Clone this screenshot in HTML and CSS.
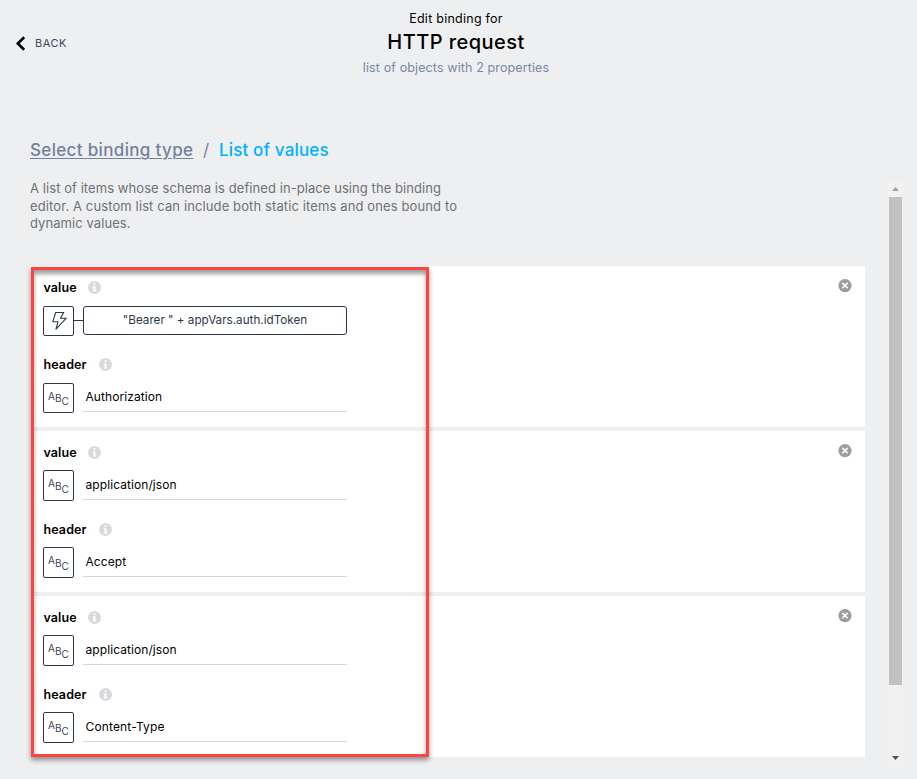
FILE: index.html
```html
<!DOCTYPE html>
<html lang="en">
<head>
<meta charset="utf-8">
<title>Edit binding</title>
<link rel="stylesheet" href="styles.css">
</head>
<body>
<svg class="defs" width="0" height="0">
  <symbol id="info" viewBox="0 0 13 13"><circle cx="6.5" cy="6.5" r="6.5" fill="#d8d9dc"/><path d="M5.5 2.2h2v1.9h-2zM4.6 5.2h2.9v4.1h.9v1.3H4.6V9.3h.9V6.5h-.9z" fill="#fff"/></symbol>
  <symbol id="close" viewBox="0 0 14 14"><circle cx="7" cy="6.6" r="6.6" fill="#9b9da1"/><path d="M4.3 3.9l5.4 5.4m0-5.4l-5.4 5.4" stroke="#fff" stroke-width="1.6"/></symbol>
</svg>
<header class="top">
  <a class="back"><svg width="11" height="15" viewBox="0 0 11 15"><path d="M9.2 1.2L2.8 7.5l6.4 6.3" fill="none" stroke="#000" stroke-width="2.6"/></svg><span>BACK</span></a>
  <div class="heading">
    <div class="kicker"><span>Edit binding for</span></div>
    <h1><span>HTTP request</span></h1>
    <div class="sub"><span>list of objects with 2 properties</span></div>
  </div>
</header>
<main>
  <section class="content">
    <nav class="crumbs"><a>Select binding type</a><i>/</i><b>List of values</b></nav>
    <p class="desc"><span class="d1">A list of items whose schema is defined in-place using the binding</span><br><span class="d2">editor. A custom list can include both static items and ones bound to</span><br><span class="d3">dynamic values.</span></p>
    <div class="list">
      <article class="card first">
        <svg class="close"><use href="#close"/></svg>
        <div class="field">
          <div class="label"><span class="value">value</span><svg><use href="#info"/></svg></div>
          <div class="row"><div class="type"><svg width="18" height="20" viewBox="0 0 18 20"><path d="M5.7 1.5h8L10.5 7.2h5.8L6 18.2l2-7.5H2.9z" fill="none" stroke="#2f3747" stroke-width="1.1" stroke-linejoin="round"/></svg></div><div class="link"></div><div class="formula"><span>"Bearer " + appVars.auth.idToken</span></div></div>
        </div>
        <div class="field">
          <div class="label"><span class="header">header</span><svg><use href="#info"/></svg></div>
          <div class="row"><div class="type abc"><span>A</span><span>B</span><span>C</span></div><div class="input"><span class="auth">Authorization</span></div></div>
        </div>
      </article>
      <article class="card">
        <svg class="close"><use href="#close"/></svg>
        <div class="field">
          <div class="label"><span class="value">value</span><svg><use href="#info"/></svg></div>
          <div class="row"><div class="type abc"><span>A</span><span>B</span><span>C</span></div><div class="input"><span class="json">application/json</span></div></div>
        </div>
        <div class="field">
          <div class="label"><span class="header">header</span><svg><use href="#info"/></svg></div>
          <div class="row"><div class="type abc"><span>A</span><span>B</span><span>C</span></div><div class="input"><span class="accept">Accept</span></div></div>
        </div>
      </article>
      <article class="card">
        <svg class="close"><use href="#close"/></svg>
        <div class="field">
          <div class="label"><span class="value">value</span><svg><use href="#info"/></svg></div>
          <div class="row"><div class="type abc"><span>A</span><span>B</span><span>C</span></div><div class="input"><span class="json">application/json</span></div></div>
        </div>
        <div class="field">
          <div class="label"><span class="header">header</span><svg><use href="#info"/></svg></div>
          <div class="row"><div class="type abc"><span>A</span><span>B</span><span>C</span></div><div class="input"><span class="ctype">Content-Type</span></div></div>
        </div>
      </article>
      <div class="marker"></div>
    </div>
  </section>
  <aside class="scrollbar">
    <svg width="7" height="4" viewBox="0 0 7 4"><path d="M0 4L3.5 0 7 4z" fill="#a3a3a3"/></svg>
    <div class="thumb"></div>
    <svg class="down" width="7" height="4" viewBox="0 0 7 4"><path d="M0 0h7L3.5 4z" fill="#505050"/></svg>
  </aside>
</main>
</body>
</html>
```
FILE: styles.css
```css
* { box-sizing: border-box; }
body { margin: 0; width: 917px; height: 779px; overflow: hidden; background: #eeeff1; font-family: Inter, sans-serif; color: #000; }
svg { display: block; flex: none; }
.defs { position: absolute; }
span { white-space: nowrap; }
.top { display: grid; grid-template-columns: 200px 1fr 205px; height: 137px; }
.back { display: flex; align-items: center; height: 15px; margin: 36px 0 0 15px; font-size: 11px; color: #3e4a5c; }
.back span { margin: -2px 0 0 9px; letter-spacing: .5px; }
.heading { text-align: center; }
.kicker { margin-top: 10px; height: 18px; line-height: 18px; font-size: 12.5px; letter-spacing: .25px; }
h1 { margin: 1px 0 0; height: 26px; line-height: 26px; font-size: 20px; font-weight: 500; letter-spacing: .45px; }
.sub { margin-top: 4px; height: 18px; line-height: 18px; font-size: 12.5px; letter-spacing: .12px; color: #7988a3; }
main { display: flex; height: 642px; }
.content { width: 858px; margin-left: 30px; flex: none; }
.crumbs { display: flex; height: 26px; line-height: 26px; font-size: 17px; font-weight: 500; color: #73829d; }
.crumbs a { text-decoration: underline; text-decoration-thickness: 1px; text-underline-offset: 2px; white-space: nowrap; letter-spacing: .34px; }
.crumbs i { font-style: normal; font-weight: 400; width: 25.6px; text-align: center; }
.crumbs b { font-weight: 500; color: #00b1ff; white-space: nowrap; letter-spacing: .16px; }
.desc { margin: 17px 0 0; height: 86px; font-size: 13px; line-height: 17.5px; color: #707173; }
.d1 { letter-spacing: .07px; }
.d2 { letter-spacing: .115px; }
.d3 { letter-spacing: .07px; }
.list { position: relative; display: flex; flex-direction: column; gap: 4px; width: 834px; margin-left: 1px; }
.card { position: relative; height: 161px; padding: 11px 0 0 12px; background: #fff; display: flex; flex-direction: column; gap: 18px; }
.close { position: absolute; top: 13px; right: 13px; width: 14px; height: 14px; }
.field { height: 59px; }
.label { display: flex; align-items: center; height: 20px; font-size: 12.5px; font-weight: 600; letter-spacing: .1px; }
.label svg { width: 13px; height: 13px; margin-top: 1px; }
.label span { padding-left: .5px; }
.value { width: 45px; }
.header { width: 55.5px; }
.row { display: flex; height: 31px; margin-top: 8px; }
.type { width: 31px; height: 31px; flex: none; border: 1px solid #2f3747; border-radius: 2px; display: flex; justify-content: center; align-items: center; }
.first .type { height: 30px; margin-top: 1px; }
.abc { font-size: 10px; line-height: 10px; color: #3c4454; }
.abc span:first-child { margin-top: -5px; }
.abc span:last-child { margin-top: 6px; }
.link { width: 9px; height: 1px; margin-top: 15px; background: #2f3747; }
.formula { width: 264px; height: 29px; margin-top: 1px; border: 1px solid #2f3747; border-radius: 3px; text-align: center; font-size: 11.7px; line-height: 27px; color: #2f3747; }
.input { width: 264px; height: 30px; margin-left: 9px; padding-left: 2.5px; border-bottom: 1px solid #d8d9dc; font-size: 12px; line-height: 29px; letter-spacing: .08px; }
.ctype { letter-spacing: .15px; }
.marker { position: absolute; left: 0; top: 1px; width: 398px; height: 490px; border: 3px solid #ff4343; box-shadow: 0 3px 5px rgba(0,0,0,.42), inset 0 4px 4px rgba(0,0,0,.38); }
.scrollbar { width: 15px; height: 587px; margin-top: 44px; padding-top: 6px; background: #f1f1f1; display: flex; flex-direction: column; align-items: center; }
.thumb { width: 13px; height: 488px; margin-top: 6px; background: #c1c1c1; }
.down { margin-top: 71px; }
```
